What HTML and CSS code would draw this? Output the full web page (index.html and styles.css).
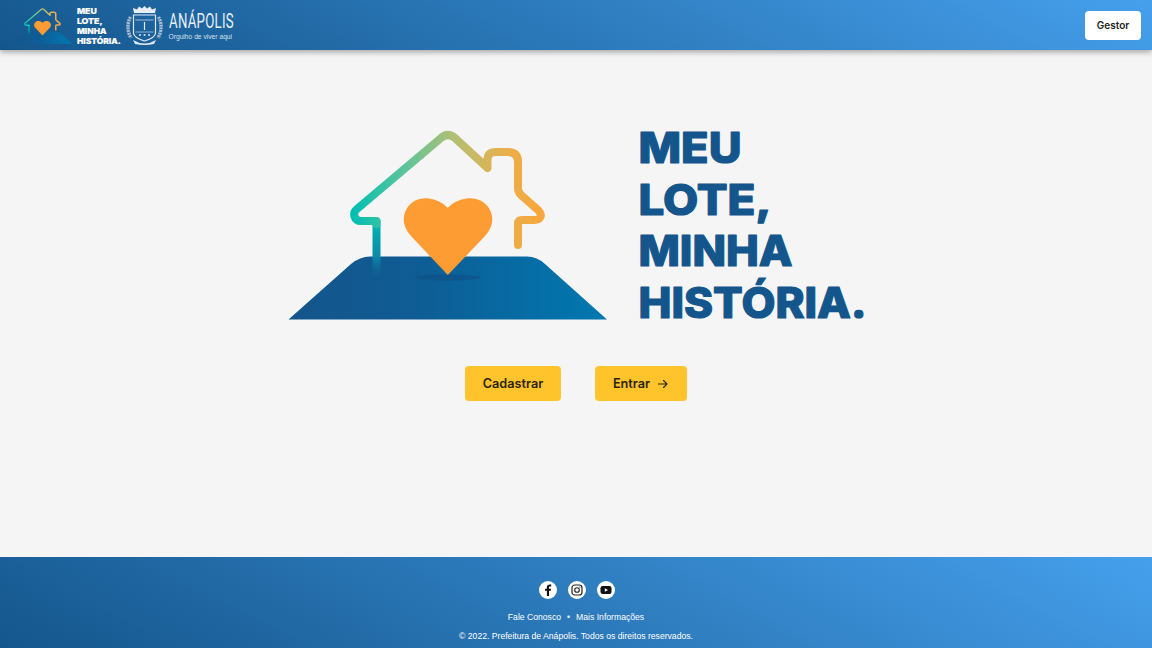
FILE: index.html
```html
<!DOCTYPE html>
<html lang="pt-BR">
<head>
<meta charset="utf-8">
<title>Meu Lote, Minha História</title>
<link rel="stylesheet" href="styles.css">
</head>
<body>
<svg class="defs" width="0" height="0" aria-hidden="true">
  <defs>
    <linearGradient id="roof" gradientUnits="userSpaceOnUse" x1="352" y1="0" x2="540" y2="0">
      <stop offset="0" stop-color="#00bfb3"/>
      <stop offset="0.28" stop-color="#5cc49a"/>
      <stop offset="0.55" stop-color="#b5bf72"/>
      <stop offset="0.8" stop-color="#e6b04e"/>
      <stop offset="1" stop-color="#f9a63c"/>
    </linearGradient>
    <linearGradient id="wall" gradientUnits="userSpaceOnUse" x1="0" y1="220" x2="0" y2="280">
      <stop offset="0" stop-color="#00bab2"/>
      <stop offset="0.6" stop-color="#0a8ba8"/>
      <stop offset="1" stop-color="#0f5f92" stop-opacity="0"/>
    </linearGradient>
    <linearGradient id="land" gradientUnits="userSpaceOnUse" x1="288" y1="0" x2="607" y2="0">
      <stop offset="0" stop-color="#14558b"/>
      <stop offset="0.4" stop-color="#0f5c94"/>
      <stop offset="1" stop-color="#0078b0"/>
    </linearGradient>
    <symbol id="house" viewBox="288 130 320 190">
      <path d="M288.500 319.500 L351 264 Q360 256.500 370 256.500 L527 256.500 Q537 256.500 545 264 L607 319.500 Z" fill="url(#land)"/>
      <ellipse cx="448" cy="277.500" rx="33" ry="3" fill="#0d4a7c" opacity="0.45"/>
      <path d="M376.500 220 L376.500 280" fill="none" stroke="url(#wall)" stroke-width="8"/>
      <path d="M376.500 224 L376.500 221 Q376.500 221 372 221 L361 221 C354 221 352 213 357 209 L441 138 Q448 132 455 138 L487.500 168 L487.500 160 Q487.500 152 496 152 L508 152 Q518 152 518 162 L518 188 Q518 192 521 195 L538 210 C543 215 541 220 534 220 L522 220 Q518 220 518 224 L518 245" fill="none" stroke="url(#roof)" stroke-width="8" stroke-linecap="round" stroke-linejoin="round"/>
      <path d="M447.800 275 L411 236 C403 227 402 218 406 210 C411 200 421 197.500 429 198.500 C437 199.500 443 203 447.800 208 C452.500 203 458.500 199.500 466.500 198.500 C474.500 197.500 485 200 490 210 C494 218 493 227 485 236 Z" fill="#fd9c33"/>
    </symbol>
  </defs>
</svg>

<header class="topbar">
  <div class="brand">
    <div class="brand-mark">
      <svg class="mini-house" viewBox="0 0 320 190"><use href="#house" width="320" height="190"/></svg>
      <svg class="wordmark wordmark-small" viewBox="0 0 226 190">
        <text x="-.5" y="33" textLength="103" lengthAdjust="spacingAndGlyphs">MEU</text>
        <text x="-.5" y="84.700" textLength="133" lengthAdjust="spacingAndGlyphs">LOTE,</text>
        <text x="-.5" y="136" textLength="154" lengthAdjust="spacingAndGlyphs">MINHA</text>
        <text x="-.5" y="188" textLength="228" lengthAdjust="spacingAndGlyphs">HISTÓRIA.</text>
      </svg>
    </div>
    <svg class="crest" viewBox="0 0 38 40" fill="none" stroke="#dfe8f2">
      <path d="M8 8 L7 3 L11 4.500 L13 1.500 L16 3.500 L18.500 1 L21 3.500 L24 1.500 L26 4.500 L30 3 L29 8 Z" fill="#e8eef5" stroke="none"/>
      <path d="M7.500 10 H29.500 V28 Q29.500 32.500 18.500 36 Q7.500 32.500 7.500 28 Z" stroke-width="1.200"/>
      <path d="M9.500 15 H27.500" stroke-width=".7"/>
      <path d="M9.500 27 H27.500" stroke-width=".6"/>
      <path d="M18.500 17 V25" stroke-width="1.200"/>
      <circle cx="14" cy="30" r="1" fill="#dfe8f2" stroke="none"/>
      <circle cx="18.500" cy="30" r="1" fill="#dfe8f2" stroke="none"/>
      <circle cx="23" cy="30" r="1" fill="#dfe8f2" stroke="none"/>
      <path d="M4.500 12 C1 18 1 26 5 33" stroke="#a9bccf" stroke-width="3.400" stroke-dasharray="2 .7"/>
      <path d="M32.500 12 C36 18 36 26 32 33" stroke="#a9bccf" stroke-width="3.400" stroke-dasharray="2 .7"/>
      <path d="M7 35 Q18.500 42 30 35 L28 39 Q18.500 41 9 39 Z" fill="#dfe8f2" stroke="none"/>
    </svg>
    <div class="city">
      <div class="city-name"><span>ANÁPOLIS</span></div>
      <div class="city-tag">Orgulho de viver aqui</div>
    </div>
  </div>
  <button class="btn-gestor" type="button">Gestor</button>
</header>

<main class="content">
  <section class="hero">
    <svg class="hero-house" viewBox="0 0 320 190"><use href="#house" width="320" height="190"/></svg>
    <svg class="wordmark wordmark-large" viewBox="0 0 226 190">
      <text x="-.5" y="33" textLength="103" lengthAdjust="spacingAndGlyphs">MEU</text>
      <text x="-.5" y="84.700" textLength="133" lengthAdjust="spacingAndGlyphs">LOTE,</text>
      <text x="-.5" y="136" textLength="154" lengthAdjust="spacingAndGlyphs">MINHA</text>
      <text x="-.5" y="188" textLength="228" lengthAdjust="spacingAndGlyphs">HISTÓRIA.</text>
    </svg>
  </section>
  <div class="actions">
    <a class="btn btn-cadastrar" href="#">Cadastrar</a>
    <a class="btn btn-entrar" href="#">Entrar
      <svg class="arrow" viewBox="0 0 12 12" fill="none" stroke="#2b2410" stroke-width="1.100" stroke-linecap="round" stroke-linejoin="round"><path d="M1.500 6 H10 M6.500 2.500 L10 6 L6.500 9.500"/></svg>
    </a>
  </div>
</main>

<footer class="footer">
  <div class="socials">
    <a class="social" href="#" aria-label="Facebook">
      <svg viewBox="0 0 18 18"><path d="M10 15 V9.800 H11.800 L12.100 7.700 H10 V6.500 C10 5.900 10.200 5.500 11 5.500 H12.200 V3.600 C11.900 3.600 11.300 3.500 10.600 3.500 C9 3.500 7.900 4.500 7.900 6.200 V7.700 H6 V9.800 H7.900 V15 Z" fill="#111"/></svg>
    </a>
    <a class="social" href="#" aria-label="Instagram">
      <svg viewBox="0 0 18 18" fill="none" stroke="#222"><rect x="4" y="4" width="10" height="10" rx="2.800" stroke-width="1.200"/><circle cx="9" cy="9" r="2.300" stroke-width="1.100"/><circle cx="11.900" cy="6.100" r=".6" fill="#222" stroke="none"/></svg>
    </a>
    <a class="social" href="#" aria-label="YouTube">
      <svg viewBox="0 0 18 18"><rect x="3.500" y="5" width="11" height="8" rx="2.200" fill="#111"/><path d="M7.800 7.200 L11 9 L7.800 10.800 Z" fill="#fff"/></svg>
    </a>
  </div>
  <nav class="foot-links"><a href="#">Fale Conosco</a><span class="dot">•</span><a href="#">Mais Informações</a></nav>
  <p class="copy">© 2022. Prefeitura de Anápolis. Todos os direitos reservados.</p>
</footer>
</body>
</html>
```
FILE: styles.css
```css
* { box-sizing: border-box; }
html, body { margin: 0; padding: 0; }
body {
  width: 1152px;
  height: 648px;
  overflow: hidden;
  display: flex;
  flex-direction: column;
  background: #f5f5f5;
  font-family: "Liberation Sans", Arial, sans-serif;
}
.defs { display: block; height: 0; width: 0; }

.topbar {
  flex: 0 0 50px;
  height: 50px;
  display: flex;
  align-items: center;
  justify-content: space-between;
  padding: 0 11px 0 12px;
  background: linear-gradient(28deg, #14568c 0%, #46a0ec 100%);
  box-shadow: 0 2px 6px rgba(0, 0, 0, .35);
  position: relative;
}
.brand { display: flex; align-items: center; }
.brand-mark { display: flex; align-items: center; gap: 4px; }
.mini-house { width: 61px; height: 36px; display: block; margin-top: 2px; }

.wordmark {
  display: block;
  overflow: visible;
  opacity: .999;
  font-family: Inter, "Liberation Sans", sans-serif;
  font-weight: 800;
  font-size: 42px;
  stroke-width: 1.200px;
  stroke-linejoin: round;
}
.wordmark-small { width: 43.500px; height: 36.600px; margin-top: 2px; fill: #fff; stroke: #fff; }
.wordmark-large { width: 226px; height: 190px; fill: #14568c; stroke: #14568c; }

.crest { width: 38px; height: 40px; display: block; margin-left: 5px; }
.city { margin: 2.700px 0 0 5px; width: 65px; color: #e6eef7; }
.city-name { height: 20px; line-height: 20px; }
.city-name span {
  display: inline-block;
  font-family: Roboto, sans-serif;
  font-weight: 400;
  font-size: 21px;
  letter-spacing: .4px;
  transform: scaleX(.63);
  transform-origin: left center;
  white-space: nowrap;
}
.city-tag { margin-top: 2.300px; font-size: 6.700px; line-height: 8px; white-space: nowrap; color: #d3e0ee; }

.btn-gestor {
  width: 56px;
  height: 29px;
  border: 0;
  border-radius: 4px;
  background: #fff;
  color: #222;
  font-family: Inter, sans-serif;
  font-size: 10px;
  font-weight: 600;
  padding: 0;
}

.content {
  flex: 1;
  display: flex;
  flex-direction: column;
  align-items: center;
  padding-top: 80px;
}
.hero { display: flex; align-items: flex-start; gap: 31px; height: 190px; }
.hero-house { width: 320px; height: 190px; display: block; }

.actions { display: flex; gap: 34px; margin-top: 46px; }
.btn {
  height: 35px;
  display: flex;
  align-items: center;
  justify-content: center;
  gap: 7px;
  border-radius: 4px;
  background: #ffc42c;
  color: #2b2410;
  font-family: Inter, sans-serif;
  font-size: 12.700px;
  font-weight: 600;
  text-decoration: none;
}
.btn-cadastrar { width: 96px; }
.btn-entrar { width: 92px; }
.arrow { width: 12px; height: 12px; display: block; }

.footer {
  flex: 0 0 91px;
  height: 91px;
  display: flex;
  flex-direction: column;
  align-items: center;
  padding-top: 24px;
  background: linear-gradient(28deg, #14568c 0%, #46a0ec 100%);
  color: #fff;
}
.socials { display: flex; gap: 11px; height: 18px; margin-left: 1px; }
.social { width: 18px; height: 18px; border-radius: 50%; background: #fff; display: block; }
.social svg { width: 18px; height: 18px; display: block; }
.foot-links {
  margin-top: 13px;
  height: 11px;
  font-size: 8.650px;
  line-height: 11px;
  display: flex;
  gap: 6px;
}
.foot-links a { color: #fff; text-decoration: none; }
.copy { margin: 8px 0 0; font-size: 8.650px; line-height: 11px; }
```
